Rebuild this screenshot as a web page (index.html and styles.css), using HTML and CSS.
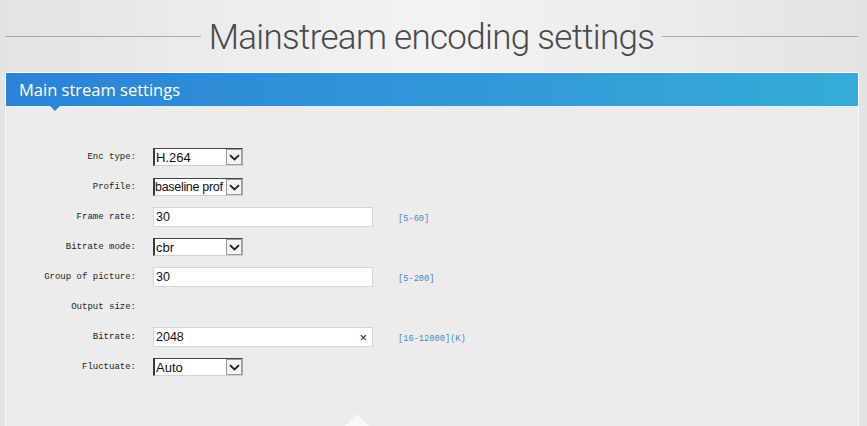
FILE: index.html
```html
<!DOCTYPE html>
<html>
<head>
<meta charset="utf-8">
<link rel="stylesheet" href="styles.css">
</head>
<body>
<div class="page">
  <div class="title-row">
    <div class="rule"></div>
    <h1 class="title">Mainstream encoding settings</h1>
    <div class="rule"></div>
  </div>
  <div class="panel">
    <div class="panel-head">
      <span class="panel-title">Main stream settings</span>
      <span class="notch"></span>
    </div>
    <div class="panel-body">
      <div class="row">
        <label class="lbl">Enc type:</label>
        <div class="ctrl"><div class="select"><span class="val">H.264</span><span class="arrow"><svg width="11" height="7" viewBox="0 0 11 7"><path d="M1 1.2 L5.5 5.5 L10 1.2" fill="none" stroke="#222" stroke-width="1.8"/></svg></span></div></div>
      </div>
      <div class="row">
        <label class="lbl">Profile:</label>
        <div class="ctrl"><div class="select"><span class="val tight">baseline prof</span><span class="arrow"><svg width="11" height="7" viewBox="0 0 11 7"><path d="M1 1.2 L5.5 5.5 L10 1.2" fill="none" stroke="#222" stroke-width="1.8"/></svg></span></div></div>
      </div>
      <div class="row">
        <label class="lbl">Frame rate:</label>
        <div class="ctrl"><div class="input"><span class="val">30</span></div></div>
        <span class="hint">[5-60]</span>
      </div>
      <div class="row">
        <label class="lbl">Bitrate mode:</label>
        <div class="ctrl"><div class="select"><span class="val">cbr</span><span class="arrow"><svg width="11" height="7" viewBox="0 0 11 7"><path d="M1 1.2 L5.5 5.5 L10 1.2" fill="none" stroke="#222" stroke-width="1.8"/></svg></span></div></div>
      </div>
      <div class="row">
        <label class="lbl">Group of picture:</label>
        <div class="ctrl"><div class="input"><span class="val">30</span></div></div>
        <span class="hint">[5-200]</span>
      </div>
      <div class="row">
        <label class="lbl">Output size:</label>
      </div>
      <div class="row">
        <label class="lbl">Bitrate:</label>
        <div class="ctrl"><div class="input"><span class="val">2048</span><span class="clear">×</span></div></div>
        <span class="hint">[16-12000](K)</span>
      </div>
      <div class="row">
        <label class="lbl">Fluctuate:</label>
        <div class="ctrl"><div class="select"><span class="val">Auto</span><span class="arrow"><svg width="11" height="7" viewBox="0 0 11 7"><path d="M1 1.2 L5.5 5.5 L10 1.2" fill="none" stroke="#222" stroke-width="1.8"/></svg></span></div></div>
      </div>
      <div class="bottom-notch"></div>
    </div>
  </div>
</div>
</body>
</html>
```
FILE: styles.css
```css
html, body {
  margin: 0;
  padding: 0;
  height: 100%;
}
body {
  background: linear-gradient(90deg, #e3e3e6 0%, #ececee 25%, #f3f3f3 50%, #ececee 75%, #e3e3e6 100%);
  overflow: hidden;
  font-family: "Liberation Sans", Arial, sans-serif;
}
.page {
  width: 867px;
}
.title-row {
  height: 72px;
  display: flex;
  align-items: center;
  padding: 0 9px 0 5px;
  gap: 8px;
  box-sizing: border-box;
}
.rule {
  flex: 1;
  height: 1px;
  background: #a9a9ab;
  margin-top: 1px;
}
.title {
  margin: 0;
  font-family: Roboto, "Liberation Sans", sans-serif;
  font-weight: 300;
  font-size: 35px;
  letter-spacing: -0.7px;
  color: #4a4a4a;
  line-height: 1;
  white-space: nowrap;
  margin-top: 2px;
}
.panel {
  margin-left: 5px;
  width: 854px;
  height: 354px;
  border-left: 1px solid #fafafa;
  border-right: 1px solid #fafafa;
  border-top: 1px solid #fafafa;
  box-sizing: border-box;
  background: #ececec;
}
.panel-head {
  position: relative;
  height: 33px;
  background: linear-gradient(90deg, #2b83d7 0%, #3196d8 50%, #35acd7 100%);
  display: flex;
  align-items: center;
  padding-left: 13px;
}
.panel-title {
  font-family: "Open Sans", "Liberation Sans", sans-serif;
  font-size: 16.5px;
  color: #fff;
  margin-top: -1px;
}
.notch {
  position: absolute;
  left: 44px;
  bottom: -5px;
  width: 0;
  height: 0;
  border-left: 5px solid transparent;
  border-right: 5px solid transparent;
  border-top: 5px solid #2d87d7;
}
.panel-body {
  position: relative;
  padding-top: 36px;
  height: 320px;
  box-sizing: border-box;
}
.row {
  display: flex;
  align-items: center;
  height: 30px;
}
.lbl {
  width: 130px;
  text-align: right;
  font-family: "Liberation Mono", "DejaVu Sans Mono", monospace;
  font-size: 9px;
  color: #222;
}
.ctrl {
  margin-left: 17px;
}
.select {
  width: 90px;
  height: 18px;
  box-sizing: border-box;
  border-top: 1px solid #444;
  border-left: 2px solid #3a3a3a;
  border-right: 1px solid #ababab;
  border-bottom: 1px solid #d0d0d0;
  background: #fff;
  display: flex;
  align-items: center;
  overflow: hidden;
}
.select .val {
  flex: 1;
  font-size: 13px;
  color: #111;
  padding-left: 1px;
  white-space: nowrap;
  overflow: hidden;
}
.select .val.tight {
  font-size: 12.5px;
  letter-spacing: -0.3px;
  padding-left: 0;
}
.arrow {
  width: 16px;
  height: 16px;
  box-sizing: border-box;
  border: 1px solid #9a9a9a;
  background: #f4f4f4;
  display: flex;
  align-items: center;
  justify-content: center;
  flex: none;
}
.input {
  width: 220px;
  height: 20px;
  box-sizing: border-box;
  border: 1px solid #d6d6d6;
  background: #fff;
  display: flex;
  align-items: center;
  padding-left: 2px;
}
.input .val {
  flex: 1;
  font-size: 12.5px;
  color: #111;
}
.clear {
  font-size: 13px;
  color: #222;
  margin-right: 5px;
}
.hint {
  margin-left: 25px;
  font-family: "Liberation Mono", "DejaVu Sans Mono", monospace;
  font-size: 8.7px;
  color: #4a86c6;
  margin-top: 3px;
}
.bottom-notch {
  position: absolute;
  left: 339px;
  bottom: 0;
  width: 0;
  height: 0;
  border-left: 12px solid transparent;
  border-right: 12px solid transparent;
  border-bottom: 12px solid #f9f9f9;
  filter: blur(0.6px);
}
```
